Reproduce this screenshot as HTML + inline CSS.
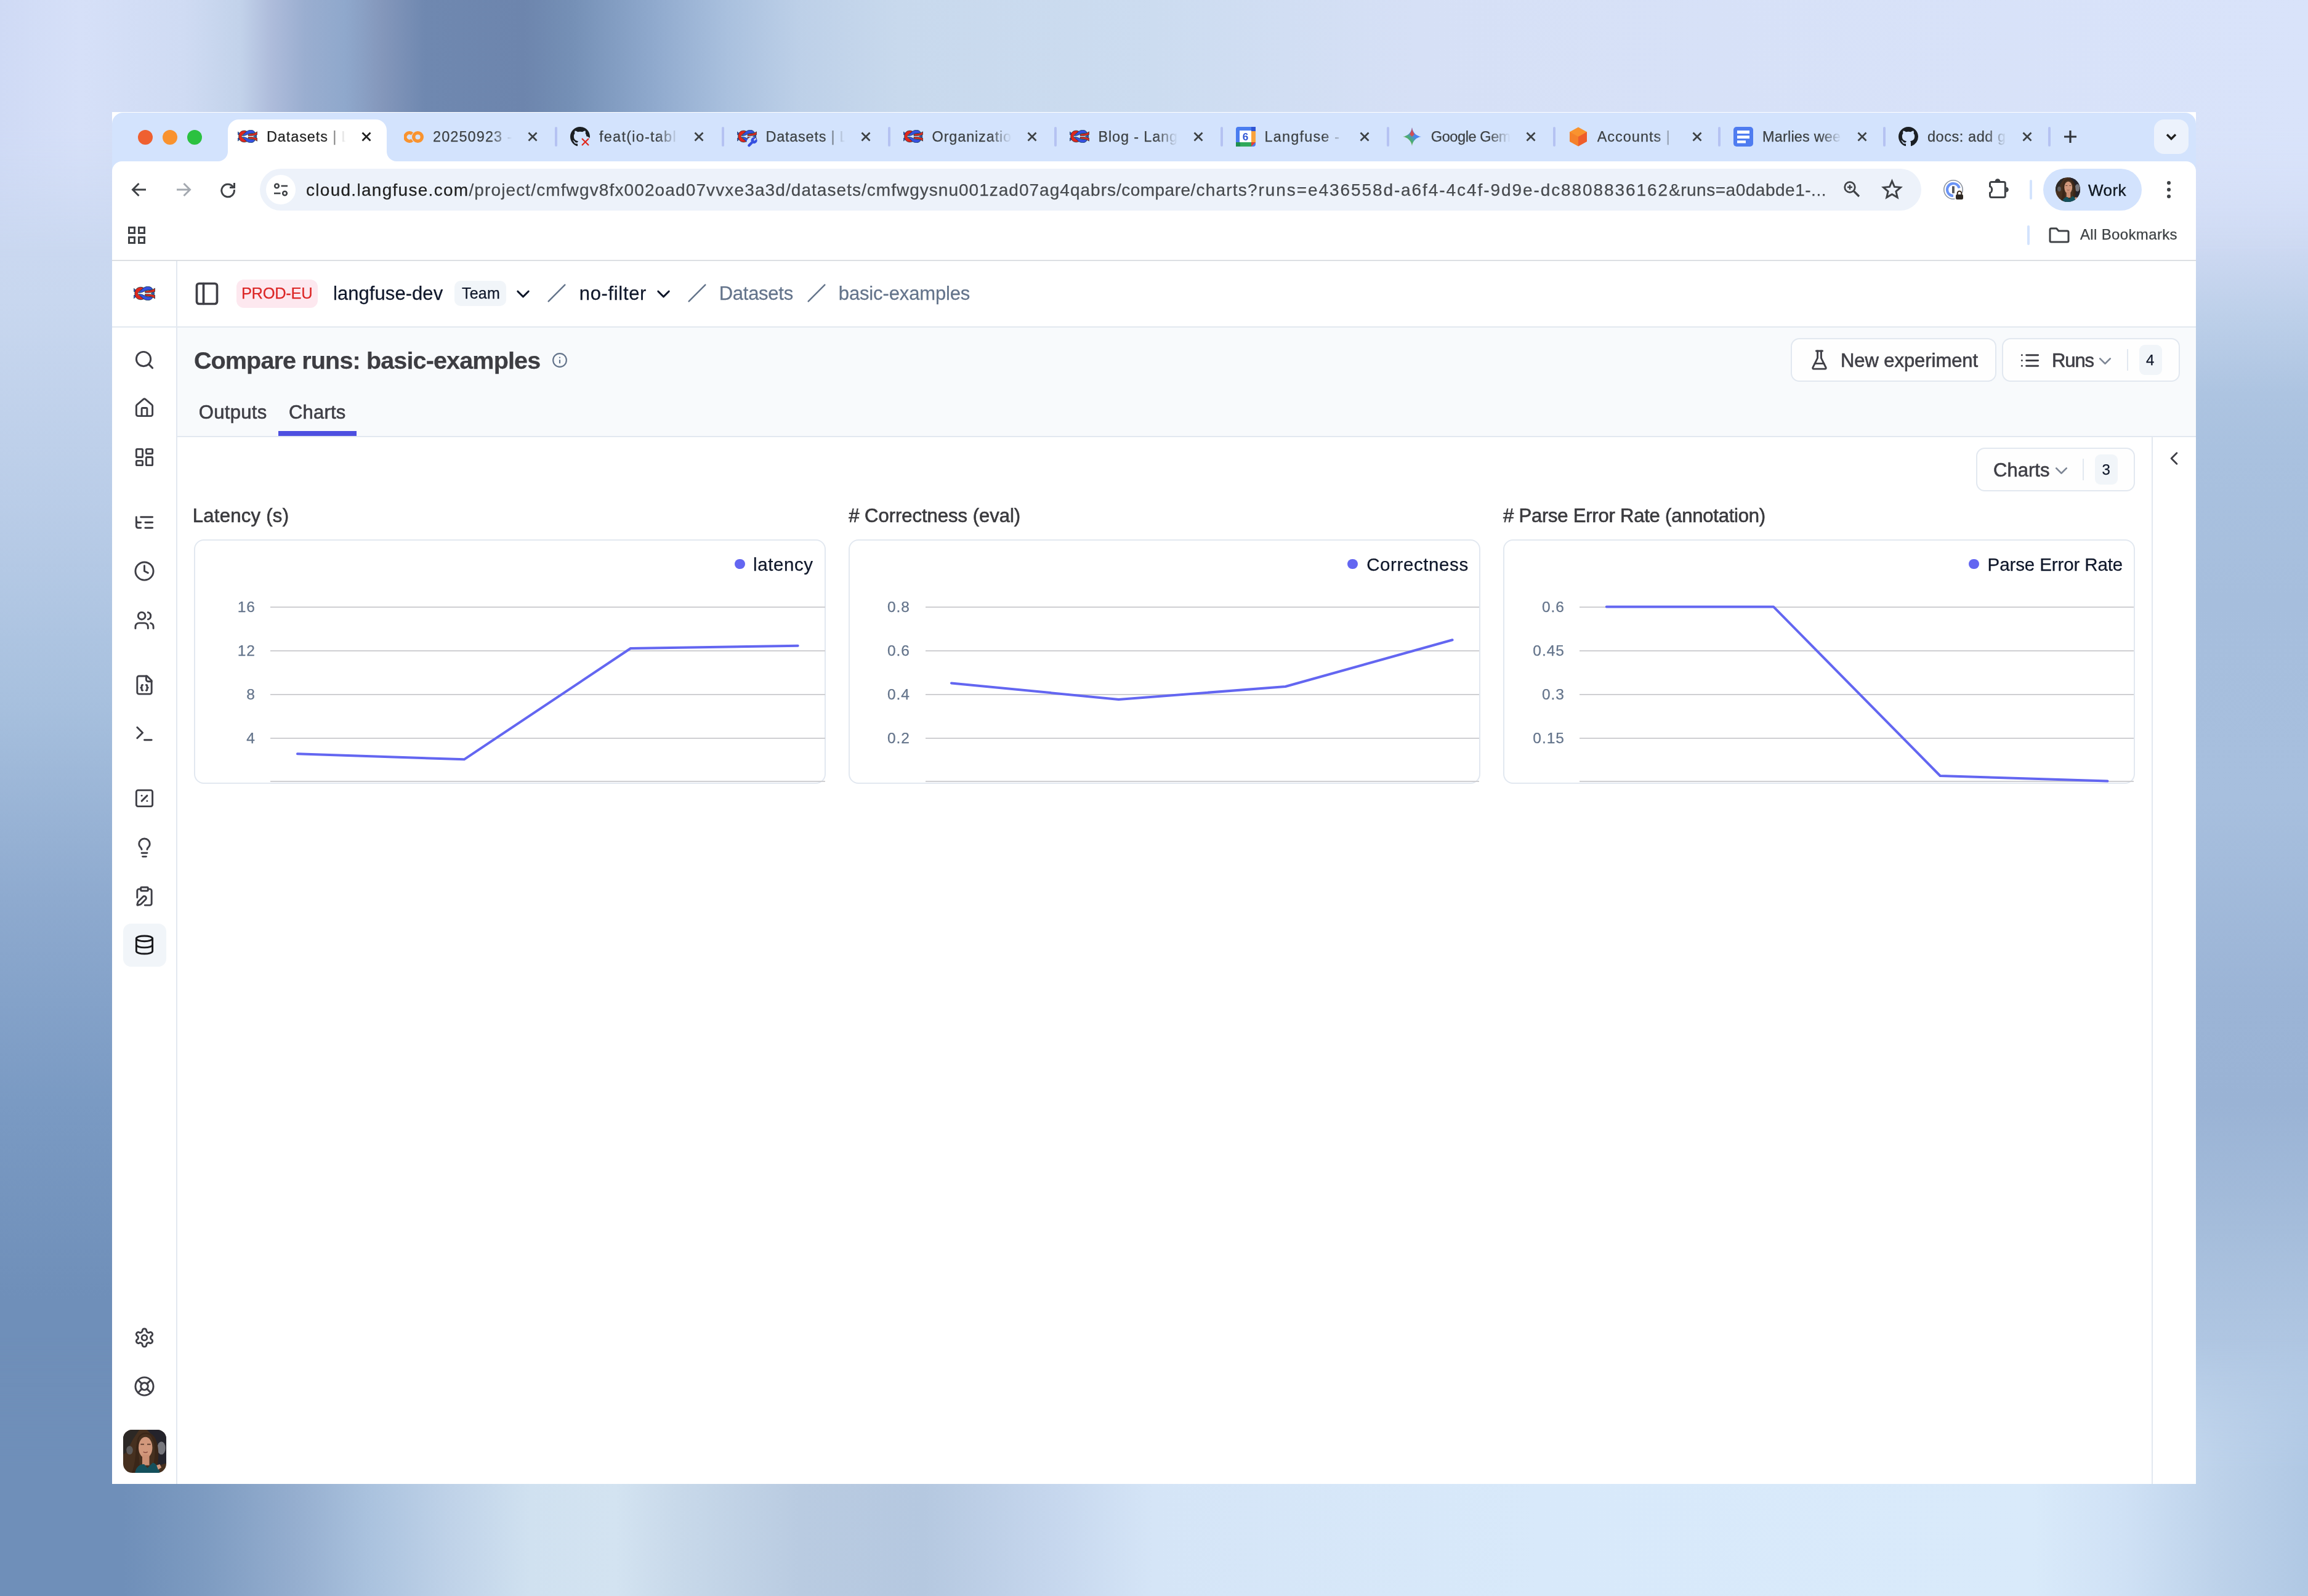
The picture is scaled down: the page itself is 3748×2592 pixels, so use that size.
<!DOCTYPE html>
<html lang="en"><head><meta charset="utf-8"><title>Datasets | Langfuse</title>
<style>
html,body{margin:0;padding:0}
body{width:3748px;height:2592px;overflow:hidden;position:relative;background:#d6e1f7;font-family:"Liberation Sans", sans-serif;}
.a{position:absolute;box-sizing:border-box;display:block}
.t{position:absolute;white-space:nowrap;line-height:1;display:block;-webkit-text-stroke:0.250px}
</style></head><body>
<div class="a" style="left:0px;top:0px;width:3748px;height:2592px;background:linear-gradient(to bottom,#d3ddf6 0.00%,#c8d7ef 18.90%,#bacde8 31.25%,#a7c0de 43.98%,#8eaacf 56.33%,#7a9ac3 69.06%,#6f8fb9 81.40%,#6f8fb9 100.00%)"></div>
<div class="a" style="left:1874px;top:0px;width:1874px;height:2592px;background:linear-gradient(to bottom,#d8e2f9 0.00%,#d6e0f8 9.65%,#cdd9f2 15.43%,#bccfe9 20.06%,#adc4e1 24.69%,#a9c1df 28.16%,#a6bedd 37.62%,#a7bfde 50.15%,#9bb4d6 62.69%,#9ab3d5 69.06%,#a5bddb 77.16%,#b5cbe6 87.77%,#c0d5ee 94.52%,#c8dcf2 100.00%)"></div>
<div class="a" style="left:0px;top:0px;width:3748px;height:420px;background:linear-gradient(to right,#cfdaf5 0.00%,#d6e0f8 3.47%,#cfdbf3 8.00%,#c2d2ea 10.41%,#aebcdb 11.74%,#9aaed0 13.21%,#8fa8cc 14.94%,#8497bb 16.54%,#6f88b0 18.41%,#6d85ad 22.68%,#7590b6 24.81%,#8fa9cd 28.28%,#a9c0de 31.48%,#bdd0e8 34.69%,#c8d9ed 38.95%,#ccdcf0 50.00%,#d6e0f6 61.37%,#d9e3fa 100.00%);-webkit-mask-image:linear-gradient(to bottom,#000 50%,transparent 100%);mask-image:linear-gradient(to bottom,#000 50%,transparent 100%)"></div>
<div class="a" style="left:0px;top:2172px;width:3748px;height:420px;background:linear-gradient(to right,#6f8fb9 0.00%,#6f8fb9 5.34%,#7d9bc1 8.80%,#95aecf 12.81%,#aac2de 16.01%,#bfd2e8 19.48%,#d0e1f0 22.95%,#d3e3f1 26.68%,#c8d9ea 29.35%,#b9cbe1 34.69%,#b5c8e0 40.02%,#c5d6ed 45.36%,#d5e5f7 50.00%,#d8e9fa 66.70%,#d9eafa 88.05%,#cfe1f5 92.05%,#bdd2ea 96.05%,#b0c8e4 100.00%);-webkit-mask-image:linear-gradient(to top,#000 50%,transparent 100%);mask-image:linear-gradient(to top,#000 50%,transparent 100%)"></div>
<div class="a" id="win" style="left:182px;top:182px;width:3384px;height:2228px;background:#fff;overflow:hidden;will-change:transform">
<div class="a" style="left:-182px;top:-182px;width:3748px;height:2592px">
<div class="a" style="left:182px;top:183.3px;width:3384px;height:108.7px;background:#d3e3fd;border-radius:18px 18px 0 0"></div>
<div class="a" style="left:182px;top:262px;width:3384px;height:162px;background:#fff;border-radius:16px 16px 0 0"></div>
<div class="a" style="left:370px;top:194px;width:258px;height:70px;background:#fff;border-radius:18px 18px 0 0"></div>
<svg class="a" style="left:354px;top:246px;width:16px;height:16px;" viewBox="0 0 16 16"><path d="M16 0 V16 H0 A16 16 0 0 0 16 0Z" fill="#fff"/></svg>
<svg class="a" style="left:628px;top:246px;width:16px;height:16px;" viewBox="0 0 16 16"><path d="M0 0 V16 H16 A16 16 0 0 1 0 0Z" fill="#fff"/></svg>
<div class="a" style="left:224px;top:210.5px;width:24px;height:24px;background:#ef6030;border-radius:50%"></div>
<div class="a" style="left:264px;top:210.5px;width:24px;height:24px;background:#f9922e;border-radius:50%"></div>
<div class="a" style="left:304px;top:210.5px;width:24px;height:24px;background:#2bc140;border-radius:50%"></div>
<svg class="a" style="left:386px;top:211px;width:32px;height:21px;" viewBox="0 0 32 21"><g stroke="#0b3440" stroke-width="0.700" stroke-linejoin="round">
<path d="M0.300 3 L3.200 5.600 L3.200 8.200 L0.300 7.600Z" fill="#3650e0"/>
<path d="M0.300 18 L3.200 15.400 L3.200 12.800 L0.300 13.400Z" fill="#3650e0"/>
<path d="M15 2.400 C10 -0.800 1.500 2 1.700 10.500 C1.500 19 10 21.800 15.500 18.600 L8.300 13.400 C7 12 6.200 11.500 6.200 10.500 C6.200 9.500 7 9 8.300 7.600Z" fill="#e0261c"/>
<path d="M7.400 9.400 C10 7 12 4.500 14.500 2.500 C17 0.800 19 0.300 21.500 0.300 C25 0.300 27.300 2.300 28.300 4.300 L24 5.600 C21 5 18.500 5.800 16.500 7 C13.500 8.900 10.500 9.500 7.400 9.500Z" fill="#3650e0"/>
<path d="M7.400 11.600 C10 14 12 16.500 14.500 18.500 C17 20.200 19 20.700 21.500 20.700 C25 20.700 27.300 18.700 28.300 16.700 L24 15.400 C21 16 18.500 15.200 16.500 14 C13.500 12.100 10.500 11.500 7.400 11.500Z" fill="#3650e0"/>
<path d="M25.600 10.500 L30.600 8.600 L30.600 12.400Z" fill="#3650e0"/>
<path d="M17 7.400 C20 5.600 25 6.600 28 5 L31.700 2.800 L31.700 7.700 C28 9.200 22 9.600 17 9.400Z" fill="#e0261c"/>
<path d="M17 13.600 C20 15.400 25 14.400 28 16 L31.700 18.200 L31.700 13.300 C28 11.800 22 11.400 17 11.600Z" fill="#e0261c"/>
</g></svg>
<div class="a" style="left:433px;top:204px;width:134px;height:38px;overflow:hidden;-webkit-mask-image:linear-gradient(to right,#000 70%,transparent 96%);mask-image:linear-gradient(to right,#000 70%,transparent 96%)">
<span class="t" id="tab0" style="left:0;top:6.8px;font-size:23.5px;color:#1f1f1f;letter-spacing:0.878px">Datasets | L</span>
</div>
<svg class="a" style="left:587px;top:214px;width:16px;height:16px;" viewBox="0 0 16 16"><path d="M1.500 1.500 L14.500 14.500 M14.500 1.500 L1.500 14.500" stroke="#1f1f1f" stroke-width="2.800" fill="none"/></svg>
<svg class="a" style="left:656px;top:212.5px;width:32px;height:19px;" viewBox="0 0 32 19"><path d="M13.300 4.400 A6.800 6.800 0 1 0 13.300 14.600" fill="none" stroke="#f9932f" stroke-width="5.400"/><circle cx="22.500" cy="9.500" r="6.800" fill="none" stroke="#f9932f" stroke-width="5.400"/></svg>
<div class="a" style="left:703px;top:204px;width:134px;height:38px;overflow:hidden;-webkit-mask-image:linear-gradient(to right,#000 70%,transparent 96%);mask-image:linear-gradient(to right,#000 70%,transparent 96%)">
<span class="t" id="tab1" style="left:0;top:6.8px;font-size:23.5px;color:#3c4043;letter-spacing:1.081px">20250923 -</span>
</div>
<svg class="a" style="left:857px;top:214px;width:16px;height:16px;" viewBox="0 0 16 16"><path d="M1.500 1.500 L14.500 14.500 M14.500 1.500 L1.500 14.500" stroke="#3c4043" stroke-width="2.800" fill="none"/></svg>
<svg class="a" style="left:926px;top:206px;width:32px;height:32px;" viewBox="0 0 16 16"><path fill="#1b1f23" d="M8 0C3.580 0 0 3.580 0 8c0 3.540 2.290 6.530 5.470 7.590.4.070.55-.17.55-.38 0-.19-.01-.82-.01-1.490-2.010.37-2.530-.49-2.690-.94-.09-.23-.48-.94-.82-1.130-.28-.15-.68-.52-.01-.53.63-.01 1.080.58 1.230.82.720 1.210 1.870.87 2.330.66.070-.52.28-.87.51-1.070-1.780-.2-3.640-.89-3.640-3.950 0-.87.310-1.590.820-2.150-.08-.2-.36-1.020.08-2.120 0 0 .67-.21 2.200.82.640-.18 1.320-.27 2-.27s1.360.09 2 .27c1.530-1.040 2.200-.82 2.200-.82.440 1.100.160 1.920.08 2.120.51.560.82 1.270.82 2.150 0 3.070-1.870 3.750-3.650 3.950.29.250.54.730.54 1.480 0 1.070-.01 1.930-.01 2.200 0 .21.15.46.55.38A8.013 8.013 0 0 0 16 8c0-4.420-3.580-8-8-8z"/></svg>
<svg class="a" style="left:940px;top:220px;width:20px;height:20px;" viewBox="0 0 20 20"><circle cx="10.500" cy="10.500" r="9.500" fill="#d3e3fd"/><path d="M5 5 L16 16 M16 5 L5 16" stroke="#e0271c" stroke-width="2.200" fill="none"/></svg>
<div class="a" style="left:973px;top:204px;width:134px;height:38px;overflow:hidden;-webkit-mask-image:linear-gradient(to right,#000 70%,transparent 96%);mask-image:linear-gradient(to right,#000 70%,transparent 96%)">
<span class="t" id="tab2" style="left:0;top:6.8px;font-size:23.5px;color:#3c4043;letter-spacing:1.237px">feat(io-tabl</span>
</div>
<svg class="a" style="left:1127px;top:214px;width:16px;height:16px;" viewBox="0 0 16 16"><path d="M1.500 1.500 L14.500 14.500 M14.500 1.500 L1.500 14.500" stroke="#3c4043" stroke-width="2.800" fill="none"/></svg>
<svg class="a" style="left:1196.5px;top:211px;width:32px;height:21px;" viewBox="0 0 32 21"><g stroke="#0b3440" stroke-width="0.700" stroke-linejoin="round">
<path d="M0.300 3 L3.200 5.600 L3.200 8.200 L0.300 7.600Z" fill="#3650e0"/>
<path d="M0.300 18 L3.200 15.400 L3.200 12.800 L0.300 13.400Z" fill="#3650e0"/>
<path d="M15 2.400 C10 -0.800 1.500 2 1.700 10.500 C1.500 19 10 21.800 15.500 18.600 L8.300 13.400 C7 12 6.200 11.500 6.200 10.500 C6.200 9.500 7 9 8.300 7.600Z" fill="#e0261c"/>
<path d="M7.400 9.400 C10 7 12 4.500 14.500 2.500 C17 0.800 19 0.300 21.500 0.300 C25 0.300 27.300 2.300 28.300 4.300 L24 5.600 C21 5 18.500 5.800 16.500 7 C13.500 8.900 10.500 9.500 7.400 9.500Z" fill="#3650e0"/>
<path d="M7.400 11.600 C10 14 12 16.500 14.500 18.500 C17 20.200 19 20.700 21.500 20.700 C25 20.700 27.300 18.700 28.300 16.700 L24 15.400 C21 16 18.500 15.200 16.500 14 C13.500 12.100 10.500 11.500 7.400 11.500Z" fill="#3650e0"/>
<path d="M25.600 10.500 L30.600 8.600 L30.600 12.400Z" fill="#3650e0"/>
<path d="M17 7.400 C20 5.600 25 6.600 28 5 L31.700 2.800 L31.700 7.700 C28 9.200 22 9.600 17 9.400Z" fill="#e0261c"/>
<path d="M17 13.600 C20 15.400 25 14.400 28 16 L31.700 18.200 L31.700 13.300 C28 11.800 22 11.400 17 11.600Z" fill="#e0261c"/>
</g></svg>
<svg class="a" style="left:1209.5px;top:219px;width:22px;height:22px;" viewBox="0 0 22 22"><circle cx="11.500" cy="12" r="9" fill="#d3e3fd"/><g transform="translate(2.500,3) scale(0.750)"><path d="M14.700 6.300a1 1 0 0 0 0 1.400l1.600 1.600a1 1 0 0 0 1.400 0l3.770-3.770a6 6 0 0 1-7.940 7.940l-6.910 6.910a2.120 2.120 0 0 1-3-3l6.910-6.910a6 6 0 0 1 7.940-7.940l-3.760 3.760z" fill="#3650e0" stroke="#3650e0" stroke-width="1.500" stroke-linejoin="round"/></g></svg>
<div class="a" style="left:1243.5px;top:204px;width:134px;height:38px;overflow:hidden;-webkit-mask-image:linear-gradient(to right,#000 70%,transparent 96%);mask-image:linear-gradient(to right,#000 70%,transparent 96%)">
<span class="t" id="tab3" style="left:0;top:6.8px;font-size:23.5px;color:#3c4043;letter-spacing:0.743px">Datasets | L</span>
</div>
<svg class="a" style="left:1397.5px;top:214px;width:16px;height:16px;" viewBox="0 0 16 16"><path d="M1.500 1.500 L14.500 14.500 M14.500 1.500 L1.500 14.500" stroke="#3c4043" stroke-width="2.800" fill="none"/></svg>
<svg class="a" style="left:1466.5px;top:211px;width:32px;height:21px;" viewBox="0 0 32 21"><g stroke="#0b3440" stroke-width="0.700" stroke-linejoin="round">
<path d="M0.300 3 L3.200 5.600 L3.200 8.200 L0.300 7.600Z" fill="#3650e0"/>
<path d="M0.300 18 L3.200 15.400 L3.200 12.800 L0.300 13.400Z" fill="#3650e0"/>
<path d="M15 2.400 C10 -0.800 1.500 2 1.700 10.500 C1.500 19 10 21.800 15.500 18.600 L8.300 13.400 C7 12 6.200 11.500 6.200 10.500 C6.200 9.500 7 9 8.300 7.600Z" fill="#e0261c"/>
<path d="M7.400 9.400 C10 7 12 4.500 14.500 2.500 C17 0.800 19 0.300 21.500 0.300 C25 0.300 27.300 2.300 28.300 4.300 L24 5.600 C21 5 18.500 5.800 16.500 7 C13.500 8.900 10.500 9.500 7.400 9.500Z" fill="#3650e0"/>
<path d="M7.400 11.600 C10 14 12 16.500 14.500 18.500 C17 20.200 19 20.700 21.500 20.700 C25 20.700 27.300 18.700 28.300 16.700 L24 15.400 C21 16 18.500 15.200 16.500 14 C13.500 12.100 10.500 11.500 7.400 11.500Z" fill="#3650e0"/>
<path d="M25.600 10.500 L30.600 8.600 L30.600 12.400Z" fill="#3650e0"/>
<path d="M17 7.400 C20 5.600 25 6.600 28 5 L31.700 2.800 L31.700 7.700 C28 9.200 22 9.600 17 9.400Z" fill="#e0261c"/>
<path d="M17 13.600 C20 15.400 25 14.400 28 16 L31.700 18.200 L31.700 13.300 C28 11.800 22 11.400 17 11.600Z" fill="#e0261c"/>
</g></svg>
<div class="a" style="left:1513.5px;top:204px;width:134px;height:38px;overflow:hidden;-webkit-mask-image:linear-gradient(to right,#000 70%,transparent 96%);mask-image:linear-gradient(to right,#000 70%,transparent 96%)">
<span class="t" id="tab4" style="left:0;top:6.8px;font-size:23.5px;color:#3c4043;letter-spacing:0.847px">Organizatio</span>
</div>
<svg class="a" style="left:1667.5px;top:214px;width:16px;height:16px;" viewBox="0 0 16 16"><path d="M1.500 1.500 L14.500 14.500 M14.500 1.500 L1.500 14.500" stroke="#3c4043" stroke-width="2.800" fill="none"/></svg>
<svg class="a" style="left:1736.5px;top:211px;width:32px;height:21px;" viewBox="0 0 32 21"><g stroke="#0b3440" stroke-width="0.700" stroke-linejoin="round">
<path d="M0.300 3 L3.200 5.600 L3.200 8.200 L0.300 7.600Z" fill="#3650e0"/>
<path d="M0.300 18 L3.200 15.400 L3.200 12.800 L0.300 13.400Z" fill="#3650e0"/>
<path d="M15 2.400 C10 -0.800 1.500 2 1.700 10.500 C1.500 19 10 21.800 15.500 18.600 L8.300 13.400 C7 12 6.200 11.500 6.200 10.500 C6.200 9.500 7 9 8.300 7.600Z" fill="#e0261c"/>
<path d="M7.400 9.400 C10 7 12 4.500 14.500 2.500 C17 0.800 19 0.300 21.500 0.300 C25 0.300 27.300 2.300 28.300 4.300 L24 5.600 C21 5 18.500 5.800 16.500 7 C13.500 8.900 10.500 9.500 7.400 9.500Z" fill="#3650e0"/>
<path d="M7.400 11.600 C10 14 12 16.500 14.500 18.500 C17 20.200 19 20.700 21.500 20.700 C25 20.700 27.300 18.700 28.300 16.700 L24 15.400 C21 16 18.500 15.200 16.500 14 C13.500 12.100 10.500 11.500 7.400 11.500Z" fill="#3650e0"/>
<path d="M25.600 10.500 L30.600 8.600 L30.600 12.400Z" fill="#3650e0"/>
<path d="M17 7.400 C20 5.600 25 6.600 28 5 L31.700 2.800 L31.700 7.700 C28 9.200 22 9.600 17 9.400Z" fill="#e0261c"/>
<path d="M17 13.600 C20 15.400 25 14.400 28 16 L31.700 18.200 L31.700 13.300 C28 11.800 22 11.400 17 11.600Z" fill="#e0261c"/>
</g></svg>
<div class="a" style="left:1783.5px;top:204px;width:134px;height:38px;overflow:hidden;-webkit-mask-image:linear-gradient(to right,#000 70%,transparent 96%);mask-image:linear-gradient(to right,#000 70%,transparent 96%)">
<span class="t" id="tab5" style="left:0;top:6.8px;font-size:23.5px;color:#3c4043;letter-spacing:0.844px">Blog - Lang</span>
</div>
<svg class="a" style="left:1937.5px;top:214px;width:16px;height:16px;" viewBox="0 0 16 16"><path d="M1.500 1.500 L14.500 14.500 M14.500 1.500 L1.500 14.500" stroke="#3c4043" stroke-width="2.800" fill="none"/></svg>
<svg class="a" style="left:2006.5px;top:206px;width:32px;height:32px;" viewBox="0 0 32 32"><rect x="0" y="0" width="32" height="32" rx="4" fill="#4a7df0"/><rect x="24" y="7" width="8" height="18" fill="#f9a33c"/><rect x="7" y="25" width="18" height="7" fill="#2fa95a"/><path d="M25 25 h7 l-7 7z" fill="#e34133"/><rect x="0" y="25" width="7" height="7" rx="0" fill="#1e8e4e"/><rect x="6" y="6" width="19" height="19" fill="#fff"/><rect x="25" y="0" width="7" height="7" fill="#2f55d4"/><text x="15.500" y="22" font-family="Liberation Sans, sans-serif" font-size="17" font-weight="700" fill="#2f55d4" text-anchor="middle">6</text></svg>
<div class="a" style="left:2053.5px;top:204px;width:134px;height:38px;overflow:hidden;-webkit-mask-image:linear-gradient(to right,#000 70%,transparent 96%);mask-image:linear-gradient(to right,#000 70%,transparent 96%)">
<span class="t" id="tab6" style="left:0;top:6.8px;font-size:23.5px;color:#3c4043;letter-spacing:1.177px">Langfuse -</span>
</div>
<svg class="a" style="left:2207.5px;top:214px;width:16px;height:16px;" viewBox="0 0 16 16"><path d="M1.500 1.500 L14.500 14.500 M14.500 1.500 L1.500 14.500" stroke="#3c4043" stroke-width="2.800" fill="none"/></svg>
<svg class="a" style="left:2276.8px;top:206px;width:32px;height:32px;" viewBox="0 0 32 32"><defs><linearGradient id="gg" x1="0" y1="1" x2="1" y2="0"><stop offset="0" stop-color="#f2a03c"/><stop offset=".35" stop-color="#4caf6a"/><stop offset=".6" stop-color="#4a86f0"/><stop offset="1" stop-color="#4a7df0"/></linearGradient></defs><path d="M16 1 C17 9 23 15 31 16 C23 17 17 23 16 31 C15 23 9 17 1 16 C9 15 15 9 16 1Z" fill="url(#gg)"/><path d="M16 1 C16.500 6 18 9 20 12 L16 16 L12 12 C14 9 15.500 6 16 1Z" fill="#e8453c" opacity=".85"/></svg>
<div class="a" style="left:2323.8px;top:204px;width:134px;height:38px;overflow:hidden;-webkit-mask-image:linear-gradient(to right,#000 70%,transparent 96%);mask-image:linear-gradient(to right,#000 70%,transparent 96%)">
<span class="t" id="tab7" style="left:0;top:6.8px;font-size:23.5px;color:#3c4043;letter-spacing:-0.399px">Google Gem</span>
</div>
<svg class="a" style="left:2477.8px;top:214px;width:16px;height:16px;" viewBox="0 0 16 16"><path d="M1.500 1.500 L14.500 14.500 M14.500 1.500 L1.500 14.500" stroke="#3c4043" stroke-width="2.800" fill="none"/></svg>
<svg class="a" style="left:2546.7px;top:206px;width:32px;height:32px;" viewBox="0 0 32 32"><path d="M16 0.500 L30 8.300 V23.700 L16 31.500 L2 23.700 V8.300Z" fill="#f9932f"/><path d="M16 16 L30 8.300 V23.700 L16 31.500Z" fill="#ee5d2c"/><path d="M16 16 L2 8.300 V23.700 L16 31.500Z" fill="#f5812b"/></svg>
<div class="a" style="left:2593.7px;top:204px;width:134px;height:38px;overflow:hidden;-webkit-mask-image:linear-gradient(to right,#000 70%,transparent 96%);mask-image:linear-gradient(to right,#000 70%,transparent 96%)">
<span class="t" id="tab8" style="left:0;top:6.8px;font-size:23.5px;color:#3c4043;letter-spacing:0.982px">Accounts |</span>
</div>
<svg class="a" style="left:2747.7px;top:214px;width:16px;height:16px;" viewBox="0 0 16 16"><path d="M1.500 1.500 L14.500 14.500 M14.500 1.500 L1.500 14.500" stroke="#3c4043" stroke-width="2.800" fill="none"/></svg>
<svg class="a" style="left:2815px;top:206px;width:32px;height:32px;" viewBox="0 0 32 32"><rect width="32" height="32" rx="5" fill="#4f7cf0"/><rect x="6" y="6" width="20" height="5" fill="#fff"/><rect x="6" y="14.300" width="20" height="4.700" fill="#fff"/><rect x="6" y="22.200" width="14" height="4.300" fill="#fff"/></svg>
<div class="a" style="left:2862px;top:204px;width:134px;height:38px;overflow:hidden;-webkit-mask-image:linear-gradient(to right,#000 70%,transparent 96%);mask-image:linear-gradient(to right,#000 70%,transparent 96%)">
<span class="t" id="tab9" style="left:0;top:6.8px;font-size:23.5px;color:#3c4043;letter-spacing:0.176px">Marlies wee</span>
</div>
<svg class="a" style="left:3016px;top:214px;width:16px;height:16px;" viewBox="0 0 16 16"><path d="M1.500 1.500 L14.500 14.500 M14.500 1.500 L1.500 14.500" stroke="#3c4043" stroke-width="2.800" fill="none"/></svg>
<svg class="a" style="left:3083px;top:206px;width:32px;height:32px;" viewBox="0 0 16 16"><path fill="#1b1f23" d="M8 0C3.580 0 0 3.580 0 8c0 3.540 2.290 6.530 5.470 7.590.4.070.55-.17.55-.38 0-.19-.01-.82-.01-1.490-2.010.37-2.530-.49-2.690-.94-.09-.23-.48-.94-.82-1.130-.28-.15-.68-.52-.01-.53.63-.01 1.080.58 1.230.82.720 1.210 1.870.87 2.330.66.070-.52.28-.87.51-1.070-1.780-.2-3.640-.89-3.640-3.950 0-.87.310-1.590.820-2.150-.08-.2-.36-1.020.08-2.120 0 0 .67-.21 2.200.82.640-.18 1.320-.27 2-.27s1.360.09 2 .27c1.530-1.040 2.200-.82 2.200-.82.440 1.100.160 1.920.08 2.120.51.560.82 1.270.82 2.150 0 3.070-1.870 3.750-3.650 3.950.29.250.54.730.54 1.480 0 1.070-.01 1.930-.01 2.200 0 .21.15.46.55.38A8.013 8.013 0 0 0 16 8c0-4.420-3.580-8-8-8z"/></svg>
<div class="a" style="left:3130px;top:204px;width:134px;height:38px;overflow:hidden;-webkit-mask-image:linear-gradient(to right,#000 70%,transparent 96%);mask-image:linear-gradient(to right,#000 70%,transparent 96%)">
<span class="t" id="tab10" style="left:0;top:6.8px;font-size:23.5px;color:#3c4043;letter-spacing:0.553px">docs: add g</span>
</div>
<svg class="a" style="left:3284px;top:214px;width:16px;height:16px;" viewBox="0 0 16 16"><path d="M1.500 1.500 L14.500 14.500 M14.500 1.500 L1.500 14.500" stroke="#3c4043" stroke-width="2.800" fill="none"/></svg>
<div class="a" style="left:901px;top:206px;width:4px;height:32px;background:#b5c2f2;border-radius:2px"></div>
<div class="a" style="left:1171.5px;top:206px;width:4px;height:32px;background:#b5c2f2;border-radius:2px"></div>
<div class="a" style="left:1441.5px;top:206px;width:4px;height:32px;background:#b5c2f2;border-radius:2px"></div>
<div class="a" style="left:1711.5px;top:206px;width:4px;height:32px;background:#b5c2f2;border-radius:2px"></div>
<div class="a" style="left:1981.5px;top:206px;width:4px;height:32px;background:#b5c2f2;border-radius:2px"></div>
<div class="a" style="left:2251.8px;top:206px;width:4px;height:32px;background:#b5c2f2;border-radius:2px"></div>
<div class="a" style="left:2521.7px;top:206px;width:4px;height:32px;background:#b5c2f2;border-radius:2px"></div>
<div class="a" style="left:2790px;top:206px;width:4px;height:32px;background:#b5c2f2;border-radius:2px"></div>
<div class="a" style="left:3058px;top:206px;width:4px;height:32px;background:#b5c2f2;border-radius:2px"></div>
<div class="a" style="left:3326px;top:206px;width:4px;height:32px;background:#b5c2f2;border-radius:2px"></div>
<svg class="a" style="left:3350px;top:210px;width:24px;height:24px;" viewBox="0 0 24 24"><path d="M12 2 V22 M2 12 H22" stroke="#30343a" stroke-width="3.200" fill="none"/></svg>
<div class="a" style="left:3498px;top:194px;width:56px;height:56px;background:#ecf2fc;border-radius:16px"></div>
<svg class="a" style="left:3514px;top:210px;width:24px;height:24px;" viewBox="0 0 24 24"><path d="M5 8.500 L12 15.500 L19 8.500" stroke="#1f1f1f" stroke-width="3.400" fill="none"/></svg>
<svg class="a" style="left:212px;top:294px;width:28px;height:28px;" viewBox="0 0 28 28"><path d="M25 14 H4 M13.500 4 L3.500 14 L13.500 24" stroke="#3f4246" stroke-width="3" fill="none"/></svg>
<svg class="a" style="left:284px;top:294px;width:28px;height:28px;" viewBox="0 0 28 28"><path d="M3 14 H24 M14.500 4 L24.500 14 L14.500 24" stroke="#a4a9b0" stroke-width="3" fill="none"/></svg>
<svg class="a" style="left:356px;top:294px;width:28px;height:28px;" viewBox="0 0 28 28"><path d="M22.500 9.500 A10.300 10.300 0 1 0 24.300 14" stroke="#3f4246" stroke-width="3" fill="none"/><path d="M24.500 3 V10.500 H17" stroke="#3f4246" stroke-width="3" fill="none"/></svg>
<div class="a" style="left:422px;top:274px;width:2698px;height:68px;background:#edf2fa;border-radius:34px"></div>
<div class="a" style="left:432px;top:284px;width:48px;height:48px;background:#fff;border-radius:50%"></div>
<svg class="a" style="left:442px;top:294px;width:28px;height:28px;" viewBox="0 0 28 28"><circle cx="7.500" cy="8" r="3.300" stroke="#3f4246" stroke-width="2.600" fill="none"/><path d="M14.500 8 H25" stroke="#3f4246" stroke-width="2.600"/><circle cx="20.500" cy="20" r="3.300" stroke="#3f4246" stroke-width="2.600" fill="none"/><path d="M3 20 H13.500" stroke="#3f4246" stroke-width="2.600"/></svg>
<span class="t" id="url0" style="left:497.0px;top:295.3px;font-size:28px;letter-spacing:1.286px;color:#1f1f1f">cloud.langfuse.com</span>
<span class="t" id="url1" style="left:761.4px;top:295.3px;font-size:28px;letter-spacing:1.127px;color:#474a4e">/project/cmfwgv8fx002oad07vvxe3a3d</span>
<span class="t" id="url2" style="left:1276.0px;top:295.3px;font-size:28px;letter-spacing:1.040px;color:#474a4e">/datasets</span>
<span class="t" id="url3" style="left:1399.0px;top:295.3px;font-size:28px;letter-spacing:1.016px;color:#474a4e">/cmfwgysnu001zad07ag4qabrs</span>
<span class="t" id="url4" style="left:1813.0px;top:295.3px;font-size:28px;letter-spacing:0.471px;color:#474a4e">/compare</span>
<span class="t" id="url5" style="left:1933.5px;top:295.3px;font-size:28px;letter-spacing:1.210px;color:#474a4e">/charts</span>
<span class="t" id="url6" style="left:2026.0px;top:295.3px;font-size:28px;letter-spacing:1.922px;color:#474a4e">?runs=e436558d-a6f4-4c4f-9d9e-dc8808836162</span>
<span class="t" id="url7" style="left:2710.0px;top:295.3px;font-size:28px;letter-spacing:0.514px;color:#474a4e">&amp;runs=a0dabde1-...</span>
<svg class="a" style="left:2992.2px;top:292px;width:30px;height:30px;" viewBox="0 0 30 30"><circle cx="12" cy="12" r="8.300" stroke="#3f4246" stroke-width="2.800" fill="none"/><path d="M18.500 18.500 L27 27" stroke="#3f4246" stroke-width="3.200"/><path d="M12 8 V16 M8 12 H16" stroke="#3f4246" stroke-width="2.400"/></svg>
<svg class="a" style="left:3054.5px;top:290px;width:35px;height:35px;" viewBox="0 0 24 24"><path d="M12 2.800 L14.700 9.200 L21.600 9.800 L16.400 14.300 L18 21 L12 17.400 L6 21 L7.600 14.300 L2.400 9.800 L9.300 9.200Z" stroke="#3f4246" stroke-width="2" fill="none" stroke-linejoin="miter"/></svg>
<svg class="a" style="left:3154px;top:290px;width:36px;height:36px;" viewBox="0 0 36 36"><circle cx="18" cy="18" r="15.200" fill="#fff" stroke="#8b929e" stroke-width="1.600"/><path d="M18 28 A10 10 0 1 1 27.700 15.500" fill="none" stroke="#6a93f5" stroke-width="4.200"/><rect x="16" y="12.400" width="3.900" height="11.400" fill="#55575b"/><rect x="20.500" y="23.500" width="15" height="12.500" rx="2" fill="#fff"/><path d="M24.700 26 V23.700 A3.300 3.300 0 0 1 31.300 23.700 V26" stroke="#3a2a1e" stroke-width="2" fill="none"/><rect x="22" y="25.700" width="12" height="8.300" rx="2.200" fill="#2e2823"/></svg>
<svg class="a" style="left:3230px;top:290px;width:33px;height:33px;" viewBox="0 0 33 33"><path d="M4 5.500 H23.800 A2.500 2.500 0 0 1 26.300 8 V28 A2.500 2.500 0 0 1 23.800 30.500 H4 A2.500 2.500 0 0 1 1.500 28 V23 A3.200 5 0 0 0 1.500 13 V8 A2.500 2.500 0 0 1 4 5.500Z" stroke="#3f4246" stroke-width="3" fill="none" stroke-linejoin="round"/><path d="M9.600 4.700 A4.400 4.400 0 0 1 18.400 4.700Z" fill="#3f4246"/><path d="M27.500 13.700 A4.300 4.300 0 0 1 27.500 22.300Z" fill="#3f4246"/></svg>
<div class="a" style="left:3296px;top:292px;width:4px;height:32px;background:#d3e3fd;border-radius:2px"></div>
<div class="a" style="left:3318px;top:274px;width:160px;height:68px;background:#d3e3fd;border-radius:34px"></div>
<svg class="a" style="left:3338px;top:288px;width:40px;height:40px;" viewBox="0 0 40 40"><defs><clipPath id="pc"><circle cx="20" cy="20" r="20"/></clipPath></defs><g clip-path="url(#pc)"><rect width="40" height="40" fill="#46301f"/><path d="M22 0 H40 V31 L31 34 L29.500 14 L25 3Z" fill="#24232b"/><ellipse cx="35.500" cy="17" rx="3.800" ry="6" fill="#77777d"/><path d="M0 0 H15 L9 9 L3 21 L0 23Z" fill="#2c2825"/><ellipse cx="6" cy="19" rx="3" ry="4" fill="#5c5a5a"/><path d="M14.500 9 C16 2.500 25 2.500 27 8 C30 14 30 25 28 32 L31.500 34 C34 24 33 9 27 4.500 C21 0.500 14 3 13 10 C11 20 12 30 8 40 H16 C15 30 14 18 14.500 9Z" fill="#3a2618"/><ellipse cx="20.700" cy="16.500" rx="6.400" ry="9.800" fill="#d2987c"/><rect x="17.700" y="23" width="6.600" height="10" fill="#cb8f73"/><path d="M16.200 13.500 h3.200 M22.300 13.500 h3.200" stroke="#5a3b2c" stroke-width="0.900"/><path d="M18.700 20.500 q2 1.300 4 0" stroke="#8d4f42" stroke-width="0.900" fill="none"/><path d="M11 40 C12 34 16 31.500 19.500 32 L22.500 35.500 L27.500 30.500 C31 31.500 33 35 34 40Z" fill="#14505c"/><path d="M31 33 l3 -1 l1.500 3 l-3 2z" fill="#d2987c"/></g></svg>
<span class="t" id="work" style="left:3391.0px;top:295.8px;font-size:26px;color:#0f1720;font-weight:400;letter-spacing:0.440px;-webkit-text-stroke:0.400px #0f1720;">Work</span>
<div class="a" style="left:3519px;top:294px;width:6px;height:6px;background:#3f4246;border-radius:50%"></div>
<div class="a" style="left:3519px;top:305px;width:6px;height:6px;background:#3f4246;border-radius:50%"></div>
<div class="a" style="left:3519px;top:316px;width:6px;height:6px;background:#3f4246;border-radius:50%"></div>
<svg class="a" style="left:208px;top:368px;width:28px;height:28px;" viewBox="0 0 28 28"><rect x="1.5" y="1.5" width="9" height="9" fill="none" stroke="#3f4246" stroke-width="3"/><rect x="1.5" y="17.5" width="9" height="9" fill="none" stroke="#3f4246" stroke-width="3"/><rect x="17.5" y="1.5" width="9" height="9" fill="none" stroke="#3f4246" stroke-width="3"/><rect x="17.5" y="17.5" width="9" height="9" fill="none" stroke="#3f4246" stroke-width="3"/></svg>
<div class="a" style="left:3292px;top:366px;width:4px;height:32px;background:#d3e3fd;border-radius:2px"></div>
<svg class="a" style="left:3327px;top:368px;width:34px;height:28px;" viewBox="0 0 34 28"><path d="M2 5 A2 2 0 0 1 4 3 H12.500 L16 7 H30 A2 2 0 0 1 32 9 V23 A2 2 0 0 1 30 25 H4 A2 2 0 0 1 2 23Z" stroke="#3f4246" stroke-width="3" fill="none" stroke-linejoin="round"/></svg>
<span class="t" id="allbm" style="left:3378.0px;top:369.3px;font-size:24px;color:#3c4043;font-weight:400;letter-spacing:0.350px;">All Bookmarks</span>
<div class="a" style="left:182px;top:422px;width:3384px;height:2px;background:#dcdfe3"></div>
<div class="a" style="left:182px;top:424px;width:3384px;height:1986px;background:#fff"></div>
<div class="a" style="left:288px;top:532px;width:3278px;height:176px;background:#f8fafc"></div>
<div class="a" style="left:286px;top:424px;width:2px;height:1986px;background:#e2e8f0"></div>
<div class="a" style="left:182px;top:530px;width:3384px;height:2px;background:#e2e8f0"></div>
<div class="a" style="left:288px;top:708px;width:3278px;height:2px;background:#e2e8f0"></div>
<div class="a" style="left:3494px;top:710px;width:2px;height:1700px;background:#e2e8f0"></div>
<svg class="a" style="left:217.0px;top:464.5px;width:35px;height:23px;" viewBox="0 0 32 21"><g stroke="#0b3440" stroke-width="0.700" stroke-linejoin="round">
<path d="M0.300 3 L3.200 5.600 L3.200 8.200 L0.300 7.600Z" fill="#3650e0"/>
<path d="M0.300 18 L3.200 15.400 L3.200 12.800 L0.300 13.400Z" fill="#3650e0"/>
<path d="M15 2.400 C10 -0.800 1.500 2 1.700 10.500 C1.500 19 10 21.800 15.500 18.600 L8.300 13.400 C7 12 6.200 11.500 6.200 10.500 C6.200 9.500 7 9 8.300 7.600Z" fill="#e0261c"/>
<path d="M7.400 9.400 C10 7 12 4.500 14.500 2.500 C17 0.800 19 0.300 21.500 0.300 C25 0.300 27.300 2.300 28.300 4.300 L24 5.600 C21 5 18.500 5.800 16.500 7 C13.500 8.900 10.500 9.500 7.400 9.500Z" fill="#3650e0"/>
<path d="M7.400 11.600 C10 14 12 16.500 14.500 18.500 C17 20.200 19 20.700 21.500 20.700 C25 20.700 27.300 18.700 28.300 16.700 L24 15.400 C21 16 18.500 15.200 16.500 14 C13.500 12.100 10.500 11.500 7.400 11.500Z" fill="#3650e0"/>
<path d="M25.600 10.500 L30.600 8.600 L30.600 12.400Z" fill="#3650e0"/>
<path d="M17 7.400 C20 5.600 25 6.600 28 5 L31.700 2.800 L31.700 7.700 C28 9.200 22 9.600 17 9.400Z" fill="#e0261c"/>
<path d="M17 13.600 C20 15.400 25 14.400 28 16 L31.700 18.200 L31.700 13.300 C28 11.800 22 11.400 17 11.600Z" fill="#e0261c"/>
</g></svg>
<svg class="a" style="left:314.0px;top:454.5px;width:44px;height:44px;" viewBox="0 0 24 24" fill="none" stroke="#3f3f46" stroke-width="2" stroke-linecap="round" stroke-linejoin="round"><rect width="18" height="18" x="3" y="3" rx="2"/><path d="M9 3v18"/></svg>
<div class="a" style="left:384px;top:454px;width:132px;height:46px;background:#fde8ef;border-radius:12px"></div>
<span class="t" id="prod" style="left:391.9px;top:464.0px;font-size:25.5px;color:#dc2626;font-weight:400;letter-spacing:-0.318px;">PROD-EU</span>
<span class="t" id="lfdev" style="left:541.0px;top:460.9px;font-size:31px;color:#0f172a;font-weight:400;letter-spacing:0.060px;">langfuse-dev</span>
<div class="a" style="left:738px;top:456px;width:84px;height:41px;background:#f1f5f9;border-radius:10px"></div>
<span class="t" id="team" style="left:750.0px;top:464.2px;font-size:25px;color:#0f172a;font-weight:400;letter-spacing:0.204px;">Team</span>
<svg class="a" style="left:831.5px;top:459.5px;width:35px;height:35px;" viewBox="0 0 24 24" fill="none" stroke="#0f172a" stroke-width="2" stroke-linecap="round" stroke-linejoin="round"><path d="m6 9 6 6 6-6"/></svg>
<svg class="a" style="left:888.0px;top:460.0px;width:32px;height:32px;" viewBox="0 0 24 24" fill="none" stroke="#64748b" stroke-width="1.9" stroke-linecap="round" stroke-linejoin="round"><path d="M22 2 2 22"/></svg>
<span class="t" id="nofilter" style="left:940.8px;top:460.9px;font-size:31px;color:#0f172a;font-weight:400;letter-spacing:0.649px;">no-filter</span>
<svg class="a" style="left:1059.5px;top:459.5px;width:35px;height:35px;" viewBox="0 0 24 24" fill="none" stroke="#0f172a" stroke-width="2" stroke-linecap="round" stroke-linejoin="round"><path d="m6 9 6 6 6-6"/></svg>
<svg class="a" style="left:1115.5px;top:460.0px;width:32px;height:32px;" viewBox="0 0 24 24" fill="none" stroke="#64748b" stroke-width="1.9" stroke-linecap="round" stroke-linejoin="round"><path d="M22 2 2 22"/></svg>
<span class="t" id="datasets" style="left:1167.7px;top:460.9px;font-size:31px;color:#64748b;font-weight:400;letter-spacing:-0.267px;">Datasets</span>
<svg class="a" style="left:1309.5px;top:460.0px;width:32px;height:32px;" viewBox="0 0 24 24" fill="none" stroke="#64748b" stroke-width="1.9" stroke-linecap="round" stroke-linejoin="round"><path d="M22 2 2 22"/></svg>
<span class="t" id="basicex" style="left:1361.8px;top:460.9px;font-size:31px;color:#64748b;font-weight:400;letter-spacing:-0.138px;">basic-examples</span>
<span class="t" id="title" style="left:314.9px;top:566.2px;font-size:39.5px;color:#3d3d42;font-weight:700;letter-spacing:-0.848px;">Compare runs: basic-examples</span>
<svg class="a" style="left:896.0px;top:572.0px;width:26px;height:26px;" viewBox="0 0 24 24" fill="none" stroke="#64748b" stroke-width="2" stroke-linecap="round" stroke-linejoin="round"><circle cx="12" cy="12" r="10"/><path d="M12 16v-4"/><path d="M12 8h.01"/></svg>
<span class="t" id="outputs" style="left:322.8px;top:654.2px;font-size:31px;color:#3f3f46;font-weight:400;letter-spacing:0.301px;-webkit-text-stroke:0.600px #3f3f46;">Outputs</span>
<span class="t" id="charts" style="left:469.0px;top:654.2px;font-size:31px;color:#3f3f46;font-weight:400;letter-spacing:0.191px;-webkit-text-stroke:0.600px #3f3f46;">Charts</span>
<div class="a" style="left:452px;top:700px;width:127px;height:8px;background:#4d4fe0"></div>
<div class="a" style="left:2908px;top:549px;width:334px;height:71px;background:#fefefe;border:2px solid #e2e8f0;border-radius:14px"></div>
<svg class="a" style="left:2937.0px;top:567.0px;width:35px;height:35px;" viewBox="0 0 24 24" fill="none" stroke="#3f3f46" stroke-width="2" stroke-linecap="round" stroke-linejoin="round"><path d="M10 2v7.527a2 2 0 0 1-.211.896L4.72 20.55a1 1 0 0 0 .9 1.45h12.76a1 1 0 0 0 .9-1.45l-5.069-10.127A2 2 0 0 1 14 9.527V2"/><path d="M8.500 2h7"/><path d="M7 16h10"/></svg>
<span class="t" id="newexp" style="left:2988.9px;top:569.9px;font-size:31px;color:#3f3f46;font-weight:400;letter-spacing:-0.055px;-webkit-text-stroke:0.600px #3f3f46;">New experiment</span>
<div class="a" style="left:3251px;top:549px;width:289px;height:71px;background:#fefefe;border:2px solid #e2e8f0;border-radius:14px"></div>
<svg class="a" style="left:3279.0px;top:567.5px;width:35px;height:35px;" viewBox="0 0 24 24" fill="none" stroke="#3f3f46" stroke-width="2" stroke-linecap="round" stroke-linejoin="round"><line x1="8" x2="21" y1="6" y2="6"/><line x1="8" x2="21" y1="12" y2="12"/><line x1="8" x2="21" y1="18" y2="18"/><line x1="3" x2="3.010" y1="6" y2="6"/><line x1="3" x2="3.010" y1="12" y2="12"/><line x1="3" x2="3.010" y1="18" y2="18"/></svg>
<span class="t" id="runs" style="left:3332.0px;top:569.9px;font-size:31px;color:#3f3f46;font-weight:400;letter-spacing:-1.101px;-webkit-text-stroke:0.600px #3f3f46;">Runs</span>
<svg class="a" style="left:3402.0px;top:569.5px;width:33px;height:33px;" viewBox="0 0 24 24" fill="none" stroke="#7c8594" stroke-width="2" stroke-linecap="round" stroke-linejoin="round"><path d="m6 9 6 6 6-6"/></svg>
<div class="a" style="left:3454px;top:567px;width:2px;height:35px;background:#e2e8f0"></div>
<div class="a" style="left:3474px;top:560px;width:37px;height:49px;background:#f1f5f9;border-radius:9px"></div>
<span class="t" id="n4" style="left:3485.0px;top:573.3px;font-size:24px;color:#0f172a;font-weight:400;letter-spacing:2.322px;">4</span>
<div class="a" style="left:3208.5px;top:726.7px;width:258px;height:71px;background:#fefefe;border:2px solid #e2e8f0;border-radius:14px"></div>
<span class="t" id="chartsb" style="left:3237.0px;top:747.9px;font-size:31px;color:#3f3f46;font-weight:400;letter-spacing:0.032px;-webkit-text-stroke:0.600px #3f3f46;">Charts</span>
<svg class="a" style="left:3330.5px;top:747.5px;width:33px;height:33px;" viewBox="0 0 24 24" fill="none" stroke="#7c8594" stroke-width="2" stroke-linecap="round" stroke-linejoin="round"><path d="m6 9 6 6 6-6"/></svg>
<div class="a" style="left:3382px;top:745px;width:2px;height:35px;background:#e2e8f0"></div>
<div class="a" style="left:3402px;top:738px;width:37px;height:49px;background:#f1f5f9;border-radius:9px"></div>
<span class="t" id="n3" style="left:3413.5px;top:750.8px;font-size:24px;color:#0f172a;font-weight:400;letter-spacing:1.322px;">3</span>
<svg class="a" style="left:3513.0px;top:727.0px;width:35px;height:35px;" viewBox="0 0 24 24" fill="none" stroke="#3f3f46" stroke-width="2" stroke-linecap="round" stroke-linejoin="round"><path d="m15 18-6-6 6-6"/></svg>
<div class="a" style="left:200px;top:1499.5px;width:70px;height:70px;background:#f1f5f9;border-radius:13px"></div>
<svg class="a" style="left:217.0px;top:567.0px;width:35px;height:35px;" viewBox="0 0 24 24" fill="none" stroke="#3f3f46" stroke-width="2" stroke-linecap="round" stroke-linejoin="round"><circle cx="11" cy="11" r="8"/><path d="m21 21-4.3-4.3"/></svg>
<svg class="a" style="left:217.0px;top:645.0px;width:35px;height:35px;" viewBox="0 0 24 24" fill="none" stroke="#3f3f46" stroke-width="2" stroke-linecap="round" stroke-linejoin="round"><path d="M15 21v-8a1 1 0 0 0-1-1h-4a1 1 0 0 0-1 1v8"/><path d="M3 10a2 2 0 0 1 .709-1.528l7-5.999a2 2 0 0 1 2.582 0l7 5.999A2 2 0 0 1 21 10v9a2 2 0 0 1-2 2H5a2 2 0 0 1-2-2z"/></svg>
<svg class="a" style="left:217.0px;top:725.0px;width:35px;height:35px;" viewBox="0 0 24 24" fill="none" stroke="#3f3f46" stroke-width="2" stroke-linecap="round" stroke-linejoin="round"><rect width="7" height="9" x="3" y="3" rx="1"/><rect width="7" height="5" x="14" y="3" rx="1"/><rect width="7" height="9" x="14" y="12" rx="1"/><rect width="7" height="5" x="3" y="16" rx="1"/></svg>
<svg class="a" style="left:217.0px;top:831.0px;width:35px;height:35px;" viewBox="0 0 24 24" fill="none" stroke="#3f3f46" stroke-width="2" stroke-linecap="round" stroke-linejoin="round"><path d="M21 12h-8"/><path d="M21 6H8"/><path d="M21 18h-8"/><path d="M3 6v4c0 1.1.9 2 2 2h3"/><path d="M3 10v6c0 1.1.9 2 2 2h3"/></svg>
<svg class="a" style="left:217.0px;top:909.8px;width:35px;height:35px;" viewBox="0 0 24 24" fill="none" stroke="#3f3f46" stroke-width="2" stroke-linecap="round" stroke-linejoin="round"><circle cx="12" cy="12" r="10"/><polyline points="12 6 12 12 16 14"/></svg>
<svg class="a" style="left:217.0px;top:989.5px;width:35px;height:35px;" viewBox="0 0 24 24" fill="none" stroke="#3f3f46" stroke-width="2" stroke-linecap="round" stroke-linejoin="round"><path d="M16 21v-2a4 4 0 0 0-4-4H6a4 4 0 0 0-4 4v2"/><circle cx="9" cy="7" r="4"/><path d="M22 21v-2a4 4 0 0 0-3-3.87"/><path d="M16 3.13a4 4 0 0 1 0 7.75"/></svg>
<svg class="a" style="left:217.0px;top:1095.0px;width:35px;height:35px;" viewBox="0 0 24 24" fill="none" stroke="#3f3f46" stroke-width="2" stroke-linecap="round" stroke-linejoin="round"><path d="M15 2H6a2 2 0 0 0-2 2v16a2 2 0 0 0 2 2h12a2 2 0 0 0 2-2V7Z"/><path d="M14 2v4a2 2 0 0 0 2 2h4"/><path d="M10 12a1 1 0 0 0-1 1v1a1 1 0 0 1-1 1 1 1 0 0 1 1 1v1a1 1 0 0 0 1 1"/><path d="M14 18a1 1 0 0 0 1-1v-1a1 1 0 0 1 1-1 1 1 0 0 1-1-1v-1a1 1 0 0 0-1-1"/></svg>
<svg class="a" style="left:217.0px;top:1174.2px;width:35px;height:35px;" viewBox="0 0 24 24" fill="none" stroke="#3f3f46" stroke-width="2" stroke-linecap="round" stroke-linejoin="round"><polyline points="4 17 10 11 4 5"/><line x1="12" x2="20" y1="19" y2="19"/></svg>
<svg class="a" style="left:217.0px;top:1279.2px;width:35px;height:35px;" viewBox="0 0 24 24" fill="none" stroke="#3f3f46" stroke-width="2" stroke-linecap="round" stroke-linejoin="round"><rect width="18" height="18" x="3" y="3" rx="2"/><path d="m15 9-6 6"/><path d="M9 9h.01"/><path d="M15 15h.01"/></svg>
<svg class="a" style="left:217.0px;top:1359.2px;width:35px;height:35px;" viewBox="0 0 24 24" fill="none" stroke="#3f3f46" stroke-width="2" stroke-linecap="round" stroke-linejoin="round"><path d="M15 14c.2-1 .7-1.7 1.5-2.5 1-.9 1.5-2.2 1.5-3.5A6 6 0 0 0 6 8c0 1 .2 2.2 1.5 3.5.7.7 1.3 1.500 1.500 2.500"/><path d="M9 18h6"/><path d="M10 22h4"/></svg>
<svg class="a" style="left:217.0px;top:1438.3px;width:35px;height:35px;" viewBox="0 0 24 24" fill="none" stroke="#3f3f46" stroke-width="2" stroke-linecap="round" stroke-linejoin="round"><rect width="8" height="4" x="8" y="2" rx="1"/><path d="M16 4h2a2 2 0 0 1 2 2v14a2 2 0 0 1-2 2h-5.500"/><path d="M4 13.500V6a2 2 0 0 1 2-2h2"/><path d="M13.378 15.626a1 1 0 1 0-3.004-3.004l-5.010 5.012a2 2 0 0 0-.506.854l-.837 2.870a.5.5 0 0 0 .62.620l2.870-.837a2 2 0 0 0 .854-.506z"/></svg>
<svg class="a" style="left:217.0px;top:1517.0px;width:35px;height:35px;" viewBox="0 0 24 24" fill="none" stroke="#18181b" stroke-width="2" stroke-linecap="round" stroke-linejoin="round"><ellipse cx="12" cy="5" rx="9" ry="3"/><path d="M3 5V19A9 3 0 0 0 21 19V5"/><path d="M3 12A9 3 0 0 0 21 12"/></svg>
<svg class="a" style="left:217.0px;top:2155.0px;width:35px;height:35px;" viewBox="0 0 24 24" fill="none" stroke="#3f3f46" stroke-width="2" stroke-linecap="round" stroke-linejoin="round"><path d="M12.22 2h-.44a2 2 0 0 0-2 2v.18a2 2 0 0 1-1 1.730l-.43.250a2 2 0 0 1-2 0l-.15-.080a2 2 0 0 0-2.730.730l-.22.380a2 2 0 0 0 .73 2.730l.15.100a2 2 0 0 1 1 1.720v.510a2 2 0 0 1-1 1.740l-.15.090a2 2 0 0 0-.73 2.730l.22.380a2 2 0 0 0 2.730.730l.15-.080a2 2 0 0 1 2 0l.43.250a2 2 0 0 1 1 1.730V20a2 2 0 0 0 2 2h.44a2 2 0 0 0 2-2v-.180a2 2 0 0 1 1-1.730l.43-.250a2 2 0 0 1 2 0l.15.080a2 2 0 0 0 2.730-.730l.22-.390a2 2 0 0 0-.73-2.730l-.15-.080a2 2 0 0 1-1-1.740v-.500a2 2 0 0 1 1-1.740l.15-.090a2 2 0 0 0 .73-2.730l-.22-.380a2 2 0 0 0-2.730-.730l-.15.080a2 2 0 0 1-2 0l-.43-.250a2 2 0 0 1-1-1.730V4a2 2 0 0 0-2-2z"/><circle cx="12" cy="12" r="3"/></svg>
<svg class="a" style="left:217.0px;top:2234.0px;width:35px;height:35px;" viewBox="0 0 24 24" fill="none" stroke="#3f3f46" stroke-width="2" stroke-linecap="round" stroke-linejoin="round"><circle cx="12" cy="12" r="10"/><path d="m4.93 4.93 4.24 4.24"/><path d="m14.83 9.17 4.24-4.24"/><path d="m14.83 14.83 4.24 4.24"/><path d="m9.17 14.83-4.24 4.24"/><circle cx="12" cy="12" r="4"/></svg>
<svg class="a" style="left:200px;top:2322px;width:70px;height:70px;" viewBox="0 0 40 40"><defs><clipPath id="av"><rect width="40" height="40" rx="8.500"/></clipPath></defs><g clip-path="url(#av)"><rect width="40" height="40" fill="#46301f"/><path d="M22 0 H40 V31 L31 34 L29.500 14 L25 3Z" fill="#24232b"/><ellipse cx="35.500" cy="17" rx="3.800" ry="6" fill="#77777d"/><path d="M0 0 H15 L9 9 L3 21 L0 23Z" fill="#2c2825"/><ellipse cx="6" cy="19" rx="3" ry="4" fill="#5c5a5a"/><path d="M14.500 9 C16 2.500 25 2.500 27 8 C30 14 30 25 28 32 L31.500 34 C34 24 33 9 27 4.500 C21 0.500 14 3 13 10 C11 20 12 30 8 40 H16 C15 30 14 18 14.500 9Z" fill="#3a2618"/><ellipse cx="20.700" cy="16.500" rx="6.400" ry="9.800" fill="#d2987c"/><rect x="17.700" y="23" width="6.600" height="10" fill="#cb8f73"/><path d="M16.200 13.500 h3.200 M22.300 13.500 h3.200" stroke="#5a3b2c" stroke-width="0.900"/><path d="M18.700 20.500 q2 1.300 4 0" stroke="#8d4f42" stroke-width="0.900" fill="none"/><path d="M11 40 C12 34 16 31.500 19.500 32 L22.500 35.500 L27.500 30.500 C31 31.500 33 35 34 40Z" fill="#14505c"/><path d="M31 33 l3 -1 l1.500 3 l-3 2z" fill="#d2987c"/></g></svg>
<span class="t" id="ct1" style="left:312.8px;top:821.9px;font-size:31px;color:#3a3a3e;font-weight:400;letter-spacing:0.283px;-webkit-text-stroke:0.650px #3a3a3e;">Latency (s)</span>
<div class="a" style="left:314.5px;top:876px;width:1026.5px;height:396.5px;border:2px solid #e2e8f0;border-radius:16px;background:#fff;"></div>
<div class="a" style="left:1192.8999999999999px;top:907.6px;width:16.8px;height:16.8px;background:#6366f1;border-radius:50%"></div>
<span class="t" id="cl1" style="left:1223.0px;top:902.1px;font-size:29.5px;color:#0f172a;font-weight:400;letter-spacing:0.598px;">latency</span>
<div class="a" style="left:439px;top:984.5px;width:900.5px;height:2px;background:#cfcfd2"></div>
<span class="t" id="cy1_0" style="right:3333.0px;top:973.5px;font-size:24.5px;color:#64748b;font-weight:400;letter-spacing:1.000px;">16</span>
<div class="a" style="left:439px;top:1055.5px;width:900.5px;height:2px;background:#cfcfd2"></div>
<span class="t" id="cy1_1" style="right:3333.0px;top:1044.5px;font-size:24.5px;color:#64748b;font-weight:400;letter-spacing:1.000px;">12</span>
<div class="a" style="left:439px;top:1126.5px;width:900.5px;height:2px;background:#cfcfd2"></div>
<span class="t" id="cy1_2" style="right:3333.0px;top:1115.5px;font-size:24.5px;color:#64748b;font-weight:400;letter-spacing:1.000px;">8</span>
<div class="a" style="left:439px;top:1197.5px;width:900.5px;height:2px;background:#cfcfd2"></div>
<span class="t" id="cy1_3" style="right:3333.0px;top:1186.5px;font-size:24.5px;color:#64748b;font-weight:400;letter-spacing:1.000px;">4</span>
<div class="a" style="left:439px;top:1268px;width:900.5px;height:2px;background:#cfcfd2"></div>
<svg class="a" style="left:0;top:0;width:3748px;height:1271px;pointer-events:none" viewBox="0 0 3748 1271"><polyline points="483.0,1224.2 753.8,1233.3 1024.0,1053.0 1295.7,1048.8" fill="none" stroke="#6366f1" stroke-width="4" stroke-linejoin="round" stroke-linecap="round"/></svg>
<span class="t" id="ct2" style="left:1378.2px;top:821.9px;font-size:31px;color:#3a3a3e;font-weight:400;letter-spacing:-0.007px;-webkit-text-stroke:0.650px #3a3a3e;"># Correctness (eval)</span>
<div class="a" style="left:1377.5px;top:876px;width:1026.5px;height:396.5px;border:2px solid #e2e8f0;border-radius:16px;background:#fff;"></div>
<div class="a" style="left:2188.1px;top:907.6px;width:16.8px;height:16.8px;background:#6366f1;border-radius:50%"></div>
<span class="t" id="cl2" style="left:2219.2px;top:902.1px;font-size:29.5px;color:#0f172a;font-weight:400;letter-spacing:0.594px;">Correctness</span>
<div class="a" style="left:1502.5px;top:984.5px;width:899.5px;height:2px;background:#cfcfd2"></div>
<span class="t" id="cy2_0" style="right:2270.0px;top:973.5px;font-size:24.5px;color:#64748b;font-weight:400;letter-spacing:1.000px;">0.8</span>
<div class="a" style="left:1502.5px;top:1055.5px;width:899.5px;height:2px;background:#cfcfd2"></div>
<span class="t" id="cy2_1" style="right:2270.0px;top:1044.5px;font-size:24.5px;color:#64748b;font-weight:400;letter-spacing:1.000px;">0.6</span>
<div class="a" style="left:1502.5px;top:1126.5px;width:899.5px;height:2px;background:#cfcfd2"></div>
<span class="t" id="cy2_2" style="right:2270.0px;top:1115.5px;font-size:24.5px;color:#64748b;font-weight:400;letter-spacing:1.000px;">0.4</span>
<div class="a" style="left:1502.5px;top:1197.5px;width:899.5px;height:2px;background:#cfcfd2"></div>
<span class="t" id="cy2_3" style="right:2270.0px;top:1186.5px;font-size:24.5px;color:#64748b;font-weight:400;letter-spacing:1.000px;">0.2</span>
<div class="a" style="left:1502.5px;top:1268px;width:899.5px;height:2px;background:#cfcfd2"></div>
<svg class="a" style="left:0;top:0;width:3748px;height:1271px;pointer-events:none" viewBox="0 0 3748 1271"><polyline points="1545.0,1109.4 1816.6,1136.0 2087.4,1115.0 2358.6,1039.3" fill="none" stroke="#6366f1" stroke-width="4" stroke-linejoin="round" stroke-linecap="round"/></svg>
<span class="t" id="ct3" style="left:2441.0px;top:821.9px;font-size:31px;color:#3a3a3e;font-weight:400;letter-spacing:-0.211px;-webkit-text-stroke:0.650px #3a3a3e;"># Parse Error Rate (annotation)</span>
<div class="a" style="left:2440.5px;top:876px;width:1026.5px;height:396.5px;border:2px solid #e2e8f0;border-radius:16px;background:#fff;"></div>
<div class="a" style="left:3197.1px;top:907.6px;width:16.8px;height:16.8px;background:#6366f1;border-radius:50%"></div>
<span class="t" id="cl3" style="left:3227.6px;top:902.1px;font-size:29.5px;color:#0f172a;font-weight:400;letter-spacing:-0.111px;">Parse Error Rate</span>
<div class="a" style="left:2565.4px;top:984.5px;width:899.5999999999999px;height:2px;background:#cfcfd2"></div>
<span class="t" id="cy3_0" style="right:1207.0px;top:973.5px;font-size:24.5px;color:#64748b;font-weight:400;letter-spacing:1.000px;">0.6</span>
<div class="a" style="left:2565.4px;top:1055.5px;width:899.5999999999999px;height:2px;background:#cfcfd2"></div>
<span class="t" id="cy3_1" style="right:1207.0px;top:1044.5px;font-size:24.5px;color:#64748b;font-weight:400;letter-spacing:1.000px;">0.45</span>
<div class="a" style="left:2565.4px;top:1126.5px;width:899.5999999999999px;height:2px;background:#cfcfd2"></div>
<span class="t" id="cy3_2" style="right:1207.0px;top:1115.5px;font-size:24.5px;color:#64748b;font-weight:400;letter-spacing:1.000px;">0.3</span>
<div class="a" style="left:2565.4px;top:1197.5px;width:899.5999999999999px;height:2px;background:#cfcfd2"></div>
<span class="t" id="cy3_3" style="right:1207.0px;top:1186.5px;font-size:24.5px;color:#64748b;font-weight:400;letter-spacing:1.000px;">0.15</span>
<div class="a" style="left:2565.4px;top:1268px;width:899.5999999999999px;height:2px;background:#cfcfd2"></div>
<svg class="a" style="left:0;top:0;width:3748px;height:1271px;pointer-events:none" viewBox="0 0 3748 1271"><polyline points="2608.8,985.4 2880.0,985.4 3150.7,1260.0 3422.4,1268.6" fill="none" stroke="#6366f1" stroke-width="4" stroke-linejoin="round" stroke-linecap="round"/></svg>
</div></div>
</body></html>
